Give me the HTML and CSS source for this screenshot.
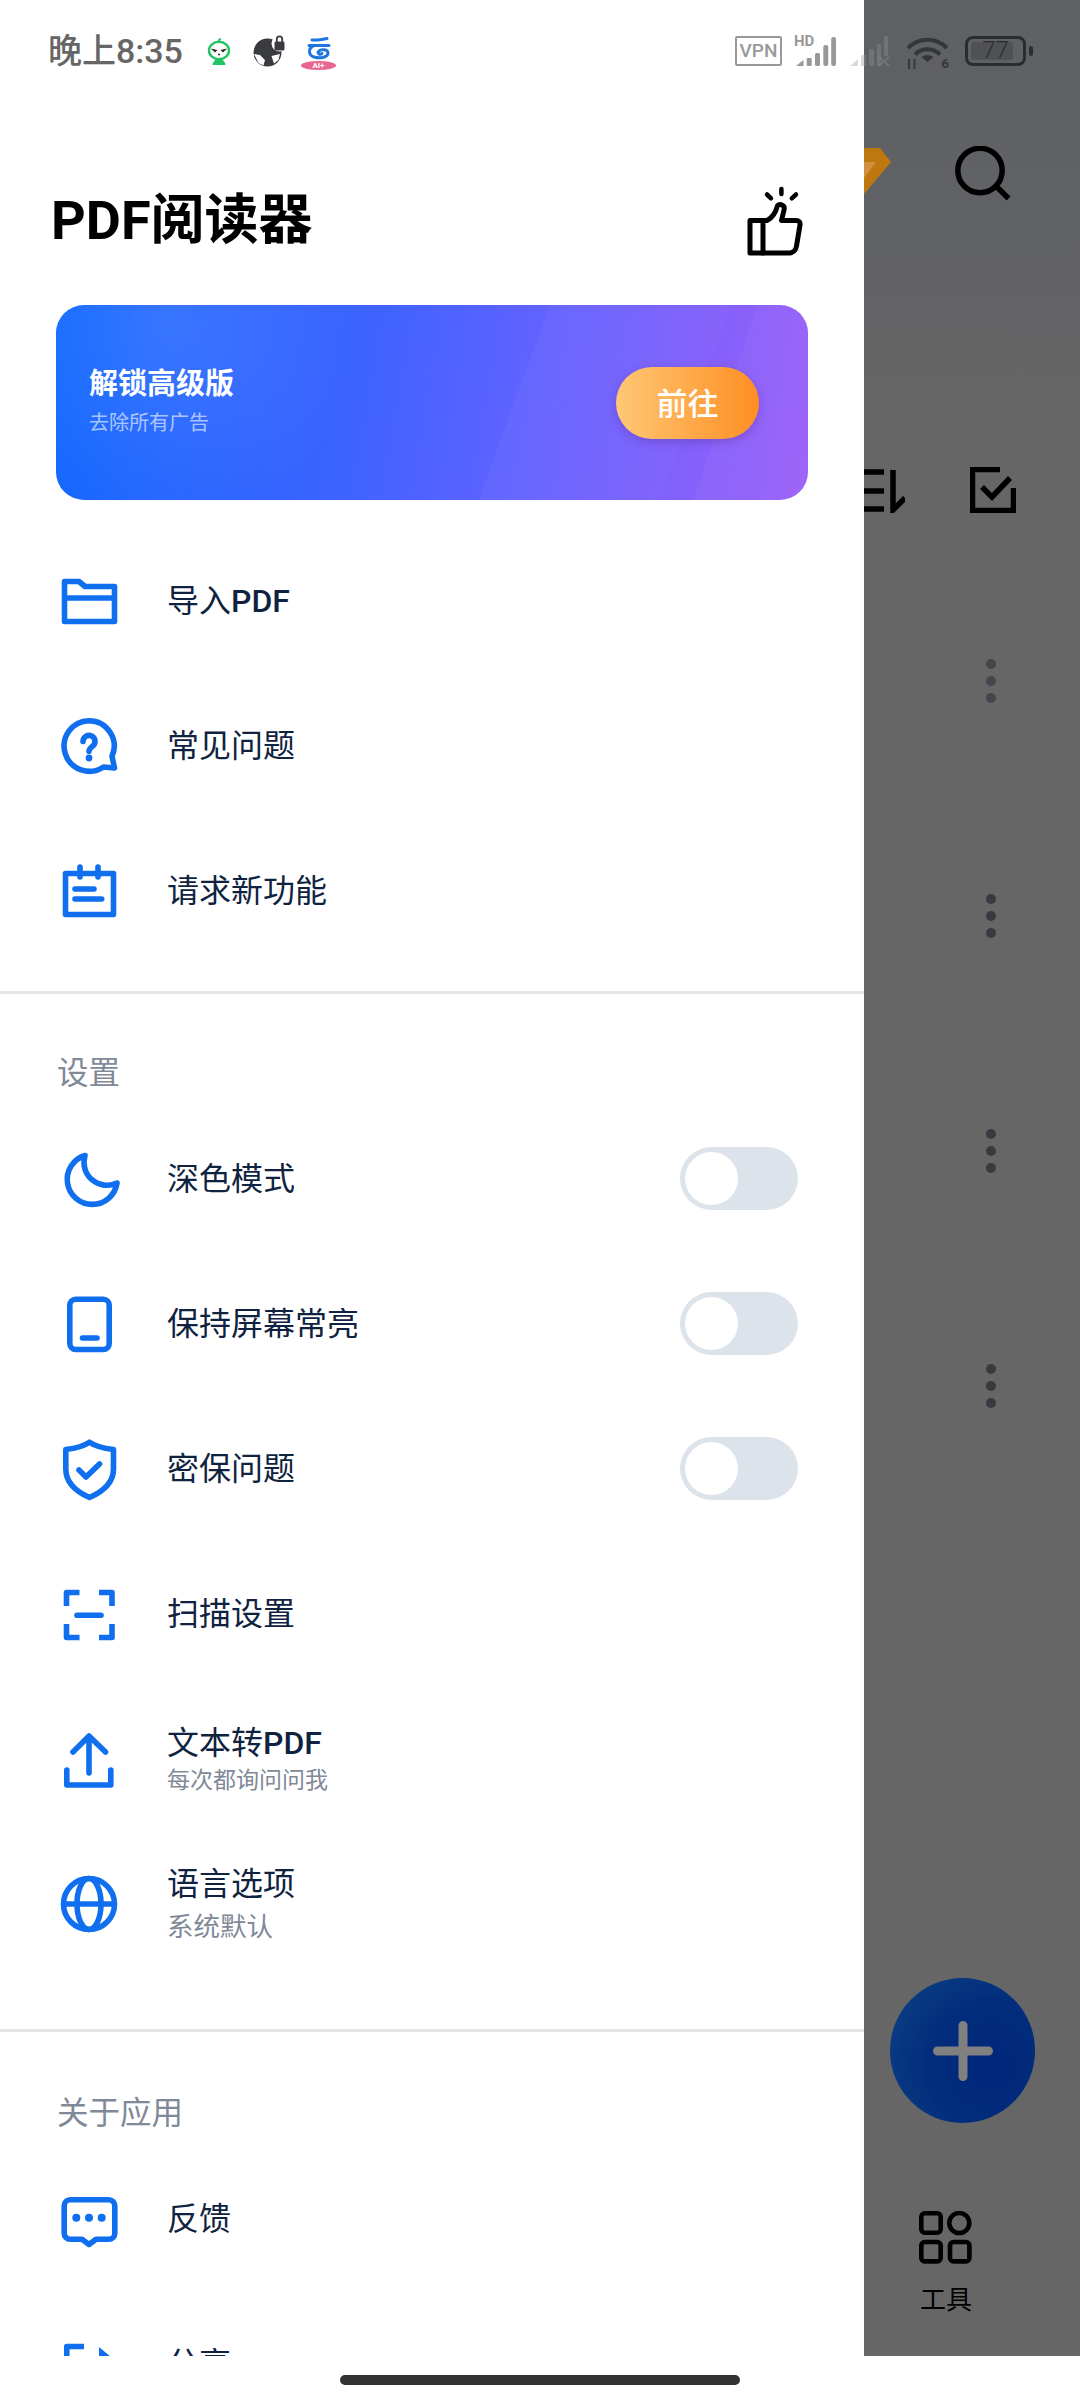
FILE: index.html
```html
<!DOCTYPE html>
<html lang="zh-CN">
<head>
<meta charset="utf-8">
<title>PDF阅读器</title>
<link rel="stylesheet" href="styles.css">
</head>
<body>
<div class="phone">
  <div class="screen">
    <aside class="drawer">
      <header class="drawer-head">
        <h1 class="app-title">PDF阅读器</h1>
        <svg class="thumb" viewBox="0 0 60 72" width="60" height="72" fill="none" stroke="#000" stroke-width="5" stroke-linejoin="round" stroke-linecap="round">
          <path d="M4 35.5H21C26 33 30 27 31 22C31.5 19.5 34 19 36 20C38.5 21 38.5 23 38 25L35.5 35.5H50C53 35.5 54.5 37 54 40L50.5 61C50 65 47 68 43 68H4Z"/>
          <path d="M17 36V68"/>
          <path d="M35.4 4V9M21 9.5L25 13.3M50 9.5L45.8 13.3" stroke-width="4.5"/>
        </svg>
      </header>

      <section class="promo">
        <div class="promo-text">
          <div class="promo-title">解锁高级版</div>
          <div class="promo-sub">去除所有广告</div>
        </div>
        <div class="promo-btn">前往</div>
      </section>

      <nav class="group group-main">
        <div class="row">
          <svg class="ico" viewBox="0 0 64 64"><path d="M7.5 12.5H22L28 17.5H57.5V52.5H7.5Z"/><path d="M7.5 29H57.5"/></svg>
          <span class="row-title">导入<span class="latin">PDF</span></span>
        </div>
        <div class="row">
          <svg class="ico" viewBox="0 0 64 64"><path d="M32 6.7a25.3 25.3 0 0 1 23 35.5l2.5 11.8l-11-1A25.3 25.3 0 1 1 32 6.7Z"/><path d="M26 27.5a6 6 0 1 1 9.5 4.8c-2 1.5-3.5 2.5-3.5 5" stroke-linecap="round"/><circle class="ico-fill" cx="32" cy="44" r="3.4"/></svg>
          <span class="row-title">常见问题</span>
        </div>
        <div class="row">
          <svg class="ico" viewBox="0 0 64 64"><rect x="8.5" y="14.5" width="48" height="41"/><path d="M23 8V18M41 8V18M18 30H37M18 40H44.7" stroke-linecap="round"/></svg>
          <span class="row-title">请求新功能</span>
        </div>
      </nav>

      <div class="divider"></div>
      <div class="group-label">设置</div>
      <div class="group">
        <div class="row">
          <svg class="ico" viewBox="0 0 64 64"><path d="M28 8.5A25 25 0 1 0 60 36A23 23 0 0 1 28 8.5Z"/></svg>
          <span class="row-title">深色模式</span>
          <span class="switch"><span class="knob"></span></span>
        </div>
        <div class="row">
          <svg class="ico" viewBox="0 0 64 64"><rect x="12.8" y="7.2" width="39.4" height="50.3" rx="6"/><path d="M25.5 46H40" stroke-linecap="round"/></svg>
          <span class="row-title">保持屏幕常亮</span>
          <span class="switch"><span class="knob"></span></span>
        </div>
        <div class="row">
          <svg class="ico" viewBox="0 0 64 64"><path d="M32.5 5.2C38 9 44 11 56.5 12.5V32C56.5 46 45 55 32.5 60.5C20 55 8.8 46 8.8 32V12.5C21 11 27 9 32.5 5.2Z"/><path d="M22 33L29 40L42.5 27" stroke-linecap="round"/></svg>
          <span class="row-title">密保问题</span>
          <span class="switch"><span class="knob"></span></span>
        </div>
        <div class="row">
          <svg class="ico" viewBox="0 0 64 64"><path d="M22.5 10.5H9.5V24M42 10.5H55V24M9.5 42V55.5H22.5M55 42V55.5H42"/><path d="M20 33.3H44" stroke-linecap="round"/></svg>
          <span class="row-title">扫描设置</span>
        </div>
        <div class="row">
          <svg class="ico" viewBox="0 0 64 64"><path d="M32 10V46M16 25L32 9L48.5 25" stroke-linecap="round"/><path d="M9.8 43V58H53.8V43" stroke-linecap="round"/></svg>
          <div class="row-stack stack-a">
            <span class="row-title">文本转<span class="latin">PDF</span></span>
            <span class="row-sub">每次都询问问我</span>
          </div>
        </div>
        <div class="row">
          <svg class="ico" viewBox="0 0 64 64"><circle cx="32" cy="32" r="25.5"/><ellipse cx="32" cy="32" rx="12" ry="25.5"/><path d="M6.5 32H57.5"/></svg>
          <div class="row-stack stack-b">
            <span class="row-title">语言选项</span>
            <span class="row-sub">系统默认</span>
          </div>
        </div>
      </div>

      <div class="divider divider-b"></div>
      <div class="group-label group-label-b">关于应用</div>
      <div class="group">
        <div class="row">
          <svg class="ico" viewBox="0 0 64 64"><path d="M13.2 12.8H51.8a6 6 0 0 1 6 6V46.2a6 6 0 0 1-6 6H39L32 57.5L25 52.2H13.2a6 6 0 0 1-6-6V18.8a6 6 0 0 1 6-6Z"/><circle class="ico-fill" cx="19.3" cy="30.7" r="4"/><circle class="ico-fill" cx="32" cy="30.7" r="4"/><circle class="ico-fill" cx="44.7" cy="30.7" r="4"/></svg>
          <span class="row-title">反馈</span>
        </div>
        <div class="row">
          <svg class="ico" viewBox="0 0 64 64"><path d="M27 14.5H9.8V50H54V34"/><polygon class="ico-fill" points="42,15 60,30 42,45"/></svg>
          <span class="row-title">分享</span>
        </div>
      </div>
    </aside>

    <main class="app">
      <div class="app-top">
        <svg class="gem" viewBox="0 0 27 46" width="27" height="46"><polygon points="0,0 16,0 27,14 0,46" fill="#bf7710"/><polygon points="0,14 12,14 0,30" fill="#cf9040"/></svg>
        <svg class="dark-ico" viewBox="0 0 57 57" width="57" height="57"><circle cx="25" cy="24.5" r="22.2"/><path d="M41 40L53.5 52.5"/></svg>
      </div>
      <div class="app-tools">
        <svg class="dark-ico" viewBox="0 0 41 46" width="41" height="46"><path d="M0 5H20M0 24H20M0 42H20M29 3V43L41 31"/></svg>
        <svg class="dark-ico" viewBox="0 0 46 46" width="46" height="46"><path d="M30 2.5H2.5V43.5H43.5V21"/><path d="M12 20L22 30L40 11"/></svg>
      </div>
      <div class="app-list">
        <svg class="dots dots-top" viewBox="0 0 10 44" width="10" height="44"><circle cx="5" cy="5" r="5"/><circle cx="5" cy="22" r="5"/><circle cx="5" cy="39" r="5"/></svg>
        <svg class="dots" viewBox="0 0 10 44" width="10" height="44"><circle cx="5" cy="5" r="5"/><circle cx="5" cy="22" r="5"/><circle cx="5" cy="39" r="5"/></svg>
        <svg class="dots" viewBox="0 0 10 44" width="10" height="44"><circle cx="5" cy="5" r="5"/><circle cx="5" cy="22" r="5"/><circle cx="5" cy="39" r="5"/></svg>
        <svg class="dots" viewBox="0 0 10 44" width="10" height="44"><circle cx="5" cy="5" r="5"/><circle cx="5" cy="22" r="5"/><circle cx="5" cy="39" r="5"/></svg>
      </div>
      <div class="fab">
        <svg viewBox="0 0 60 60" width="60" height="60"><path d="M30 4.5V55.5M4.5 30H55.5" stroke="#808080" stroke-width="9" stroke-linecap="round" fill="none"/></svg>
      </div>
      <div class="tab">
        <svg viewBox="0 0 54 54" width="54" height="54" fill="none" stroke="#000" stroke-width="4.6"><rect x="2.3" y="2.3" width="19.4" height="19.4" rx="3.5"/><circle cx="40.3" cy="12" r="10"/><rect x="2.3" y="31" width="19.4" height="19.4" rx="3.5"/><rect x="31" y="31" width="19.4" height="19.4" rx="3.5"/></svg>
        <span class="tab-label">工具</span>
      </div>
    </main>
  </div>

  <div class="statusbar">
    <div class="status-left">
      <span class="clock">晚上8:35</span>
      <svg class="s-alien" viewBox="0 0 24 27" width="24" height="27"><path d="M14 1C11.5 1.5 11 3 12 4.5" stroke="#22c466" stroke-width="1.8" fill="none"/><ellipse cx="12" cy="12.5" rx="10" ry="8.8" fill="#fff" stroke="#22c466" stroke-width="2.4"/><path d="M3.8 10.5L10.5 12L8 14.5ZM20.2 10.5L13.5 12L16 14.5Z" fill="#2a2a2a"/><circle cx="12" cy="16.5" r="1" fill="#2a2a2a"/><path d="M5.5 27C6 23 9 21 12 21S18 23 18.5 27Z" fill="#22c466"/></svg>
      <svg class="s-globe" viewBox="0 0 32 32" width="32" height="32"><circle cx="14.5" cy="17.5" r="14" fill="#3a3b3f"/><circle cx="26.5" cy="8.5" r="8" fill="#fff"/><path d="M1 19L7 20L12 25L10.5 30.5L5.5 28ZM18.5 21L27 19L25.5 25L21 28.5Z" fill="#fff"/><rect x="21.5" y="6.5" width="10" height="9" rx="1.5" fill="#3a3b3f"/><path d="M23.8 7V4a2.7 2.7 0 0 1 5.4 0V7" stroke="#3a3b3f" stroke-width="1.8" fill="none"/></svg>
      <div class="s-cloud">
        <svg viewBox="0 0 35 24" width="35" height="24" fill="none" stroke="#1f76df" stroke-width="3" stroke-linecap="round"><path d="M11 3C16 3.5 21 2.5 26 1.5M8 8.5H28"/><path d="M13 8.5C7 11 7 18 13 20C20 22 27 20 27 16C27 12.5 20 11.5 17.5 14.5C16 16.5 19 18 21 16.5"/></svg>
        <span class="s-ai">AI+</span>
      </div>
    </div>
    <div class="status-right">
      <span class="s-vpn">VPN</span>
      <div class="s-signal">
        <span class="s-hd">HD</span>
        <svg viewBox="0 0 42 30" width="42" height="30" fill="#999"><polygon points="2,30 9.5,24 9.5,30"/><rect x="12.7" y="22" width="5" height="8" rx="1"/><rect x="21" y="17" width="5" height="13" rx="1.5"/><rect x="29.3" y="9" width="5" height="21" rx="2"/><rect x="37.2" y="1" width="4.8" height="29" rx="2"/></svg>
      </div>
      <svg class="s-signal-b" viewBox="0 0 40 30" width="40" height="30" fill="rgba(150,150,150,.35)"><polygon points="0,30 8,23 8,30"/><rect x="11" y="19" width="5" height="11" rx="1"/><rect x="19" y="13" width="5" height="17" rx="1.5"/><rect x="27" y="8" width="4" height="22" rx="1.5"/><rect x="34" y="0" width="4" height="20" rx="1.5"/><path d="M29 21L39 30M39 21L29 30" stroke="rgba(150,150,150,.35)" stroke-width="2"/></svg>
      <div class="s-wifi">
        <svg viewBox="0 0 43 33" width="43" height="33" fill="none" stroke="#35363a" stroke-width="4"><path d="M2 12C13 1 30 1 41 12M9 18.5C16 11.5 27 11.5 34 18.5"/><path d="M21.5 26L15.5 21C19 18.5 24 18.5 27.5 21Z" fill="#35363a" stroke="none"/><path d="M3 23V33M8.5 23V33" stroke-width="1.8"/></svg>
        <span class="s-six">6</span>
      </div>
      <div class="s-batt">
        <div class="s-batt-body"><span class="s-batt-level"></span><span class="s-batt-num">77</span></div>
        <span class="s-batt-nub"></span>
      </div>
    </div>
  </div>

  <div class="navbar"><span class="home"></span></div>
</div>
</body>
</html>
```

FILE: styles.css
```css
* { box-sizing: border-box; }
html, body { margin: 0; padding: 0; background: #fff; }
body { font-family: Roboto, "Noto Sans CJK SC", sans-serif; }
.phone { position: relative; width: 1080px; height: 2400px; overflow: hidden; background: #fff; }
.screen { display: flex; height: 2356px; }

/* Drawer */
.drawer { width: 864px; flex: none; height: 2356px; overflow: hidden; background: #fff; }
.drawer-head { display: flex; justify-content: space-between; align-items: flex-start; height: 305px; padding: 191px 58px 0 51px; }
.app-title { margin: 0; font-size: 54px; line-height: 60px; font-weight: 700; color: #000; }
.thumb { margin-top: -6px; }

.promo {
  display: flex; justify-content: space-between; align-items: center;
  width: 752px; height: 195px; margin-left: 56px; padding: 0 49px 0 33px;
  border-radius: 28px;
  background:
    linear-gradient(108deg, transparent 86%, rgba(255,255,255,.03) 86%),
    linear-gradient(110deg, transparent 60%, rgba(255,255,255,.035) 60%, rgba(255,255,255,.02) 82%, transparent 82%),
    radial-gradient(circle at 15% 10%, rgba(255,255,255,.1), transparent 30%),
    linear-gradient(100deg, #1268ff 0%, #3a63ff 38%, #6a62ff 68%, #9c5ff7 100%);
}
.promo-title { font-size: 29px; line-height: 40px; font-weight: 700; color: #fff; margin-top: -4px; }
.promo-sub { font-size: 20px; line-height: 28px; margin-top: 5px; color: rgba(255,255,255,.62); }
.promo-btn {
  width: 143px; height: 72px; padding-bottom: 3px; border-radius: 36px;
  display: flex; align-items: center; justify-content: center;
  font-size: 31px; font-weight: 500; color: #fff;
  background: linear-gradient(90deg, #ffc775, #ff8e22);
  box-shadow: 0 3px 10px rgba(90,50,150,.4);
}

.group-main { margin-top: 28px; }
.row { display: flex; align-items: center; height: 145px; padding: 0 66px 0 57px; }
.ico { width: 64px; height: 64px; flex: none; margin-right: 46px; fill: none; stroke: #0f6fee; stroke-width: 5.6; stroke-linejoin: round; }
.ico-fill { fill: #0f6fee; stroke: none; }
.row-title { font-size: 32px; line-height: 40px; color: #0f2340; }
.latin { font-weight: 500; }
.row-stack { display: flex; flex-direction: column; }
.row-sub { color: #7f8998; }
.stack-a { padding-top: 5px; }
.stack-a .row-sub { font-size: 23px; line-height: 36px; }
.stack-b { padding-top: 7px; }
.stack-b .row-sub { font-size: 26.5px; line-height: 46px; }

.switch { margin-left: auto; width: 118px; height: 63px; padding: 5px; border-radius: 32px; background: #dde3ea; }
.knob { display: block; width: 53px; height: 53px; border-radius: 50%; background: #fff; }

.divider { height: 3px; margin-top: 28px; background: #e4e6ea; }
.divider-b { margin-top: 53px; }
.group-label { height: 40px; margin: 60px 0 12px 57px; font-size: 31.5px; line-height: 40px; color: #7f8998; }
.group-label-b { margin-top: 62px; }

/* App behind scrim */
.app { width: 216px; flex: none; height: 2356px; display: flex; flex-direction: column; background: linear-gradient(180deg, #5e6064 0, #616265 240px, #666 420px); }
.app-top { display: flex; justify-content: space-between; align-items: flex-start; height: 202px; padding: 146px 68px 0 0; }
.gem { margin-top: 2px; }
.dark-ico { fill: none; stroke: #000; stroke-width: 5.5; }
.app-tools { display: flex; justify-content: space-between; margin-top: 265px; padding-right: 64px; }
.app-list { display: flex; flex-direction: column; align-items: flex-start; gap: 191px; margin-top: 146px; padding-left: 122px; }
.dots { fill: #383a40; }
.dots-top { fill: #44464e; }
.fab {
  width: 145px; height: 145px; margin: auto 0 0 26px; border-radius: 50%;
  display: flex; align-items: center; justify-content: center;
  background: radial-gradient(circle at 70% 60%, #00277a 0, #022c7c 45%, #0a3c82 82%, #0e4f8c 96%, #2f7090 100%);
}
.tab { display: flex; flex-direction: column; align-items: center; width: 54px; margin: 88px 0 39px 55px; }
.tab-label { margin-top: 18px; font-size: 26px; line-height: 34px; color: #000; white-space: nowrap; }

/* Status bar overlay */
.statusbar { position: absolute; left: 0; top: 0; width: 1080px; height: 100px; display: flex; justify-content: space-between; align-items: flex-start; padding: 34px 47px 0 48px; }
.status-left, .status-right { display: flex; align-items: center; height: 34px; }
.clock { font-size: 34px; font-weight: 500; line-height: 34px; color: #666; white-space: nowrap; margin-right: 24px; }
.s-alien { margin-right: 22px; }
.s-globe { margin-right: 16px; }
.s-cloud { position: relative; width: 35px; height: 32px; margin-top: 4px; }
.s-cloud svg { display: block; }
.s-ai { position: absolute; left: 0; top: 24px; width: 35px; height: 9px; border-radius: 50%; background: #e8668f; color: #fff; font-size: 8px; line-height: 9px; font-weight: 700; text-align: center; }
.s-vpn { width: 47px; height: 30px; border: 2px solid #999; border-radius: 2px; font-size: 19px; line-height: 26px; font-weight: 500; color: #999; text-align: center; margin-right: 12px; }
.s-signal { position: relative; width: 42px; height: 30px; margin-right: 14px; }
.s-signal svg { display: block; }
.s-hd { position: absolute; left: 0; top: -2px; font-size: 15px; line-height: 14px; font-weight: 700; color: #999; }
.s-signal-b { margin-right: 16px; }
.s-wifi { position: relative; width: 43px; height: 33px; margin-right: 16px; margin-top: 3px; }
.s-wifi svg { display: block; }
.s-six { position: absolute; right: 0; bottom: -1px; font-size: 13px; line-height: 13px; font-weight: 700; color: #35363a; }
.s-batt { display: flex; align-items: center; width: 68px; gap: 3px; }
.s-batt-body { position: relative; width: 61px; height: 30px; border: 3.5px solid #2b2c30; border-radius: 8px; }
.s-batt-level { position: absolute; left: 3px; top: 3px; bottom: 3px; width: 42px; background: #505155; border-radius: 2px; }
.s-batt-num { position: absolute; left: 0; right: 0; top: 0; font-size: 24px; line-height: 23px; text-align: center; color: #2b2c30; font-weight: 300; }
.s-batt-nub { width: 4px; height: 10px; border-radius: 2px; background: #2b2c30; }

/* Nav bar */
.navbar { height: 44px; padding-top: 19px; display: flex; justify-content: center; background: #fff; }
.home { width: 400px; height: 10px; border-radius: 5px; background: #333; }
```
